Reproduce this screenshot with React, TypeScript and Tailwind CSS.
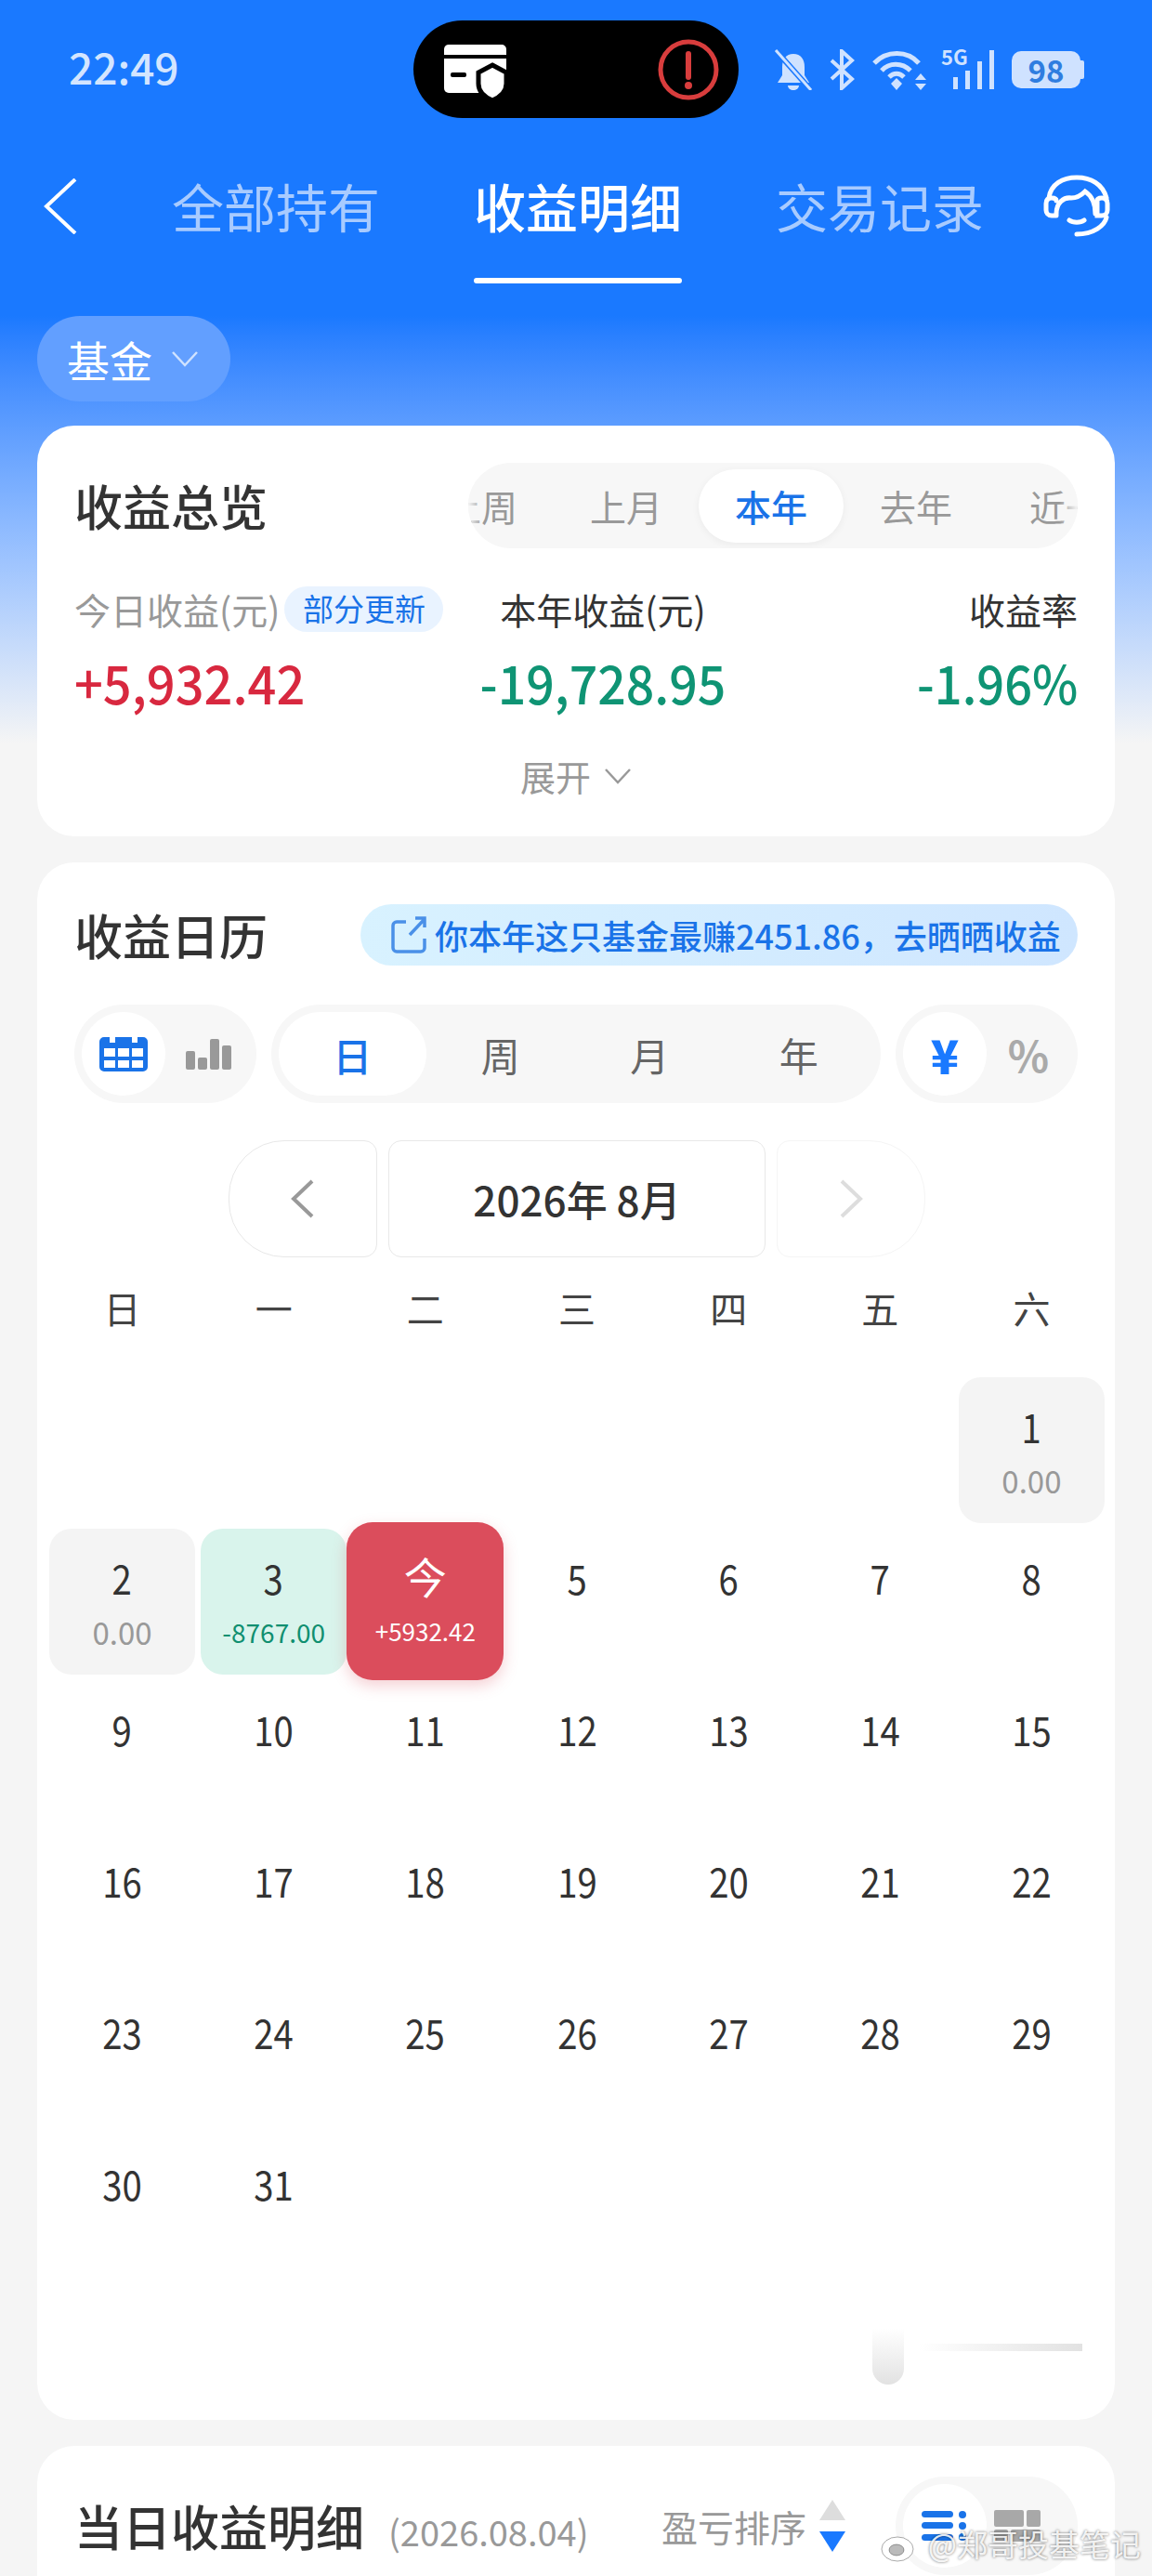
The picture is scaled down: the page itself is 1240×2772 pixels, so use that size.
const font = "font-['Noto_Sans_CJK_SC','Noto_Sans',sans-serif]";

const DownArrow = ({ color }: { color: string }) => (
  <svg width="30" height="18" viewBox="0 0 30 18" fill="none" stroke={color} strokeWidth="2.5">
    <path d="M2 2l13 14L28 2" />
  </svg>
);

const SideArrow = ({ color, right }: { color: string; right?: boolean }) => (
  <svg width="26" height="42" viewBox="0 0 26 42" fill="none" stroke={color} strokeWidth="4">
    <path d={right ? "M3 2l20 19L3 40" : "M23 2L3 21l20 19"} />
  </svg>
);

const DayCell = ({ day, value, kind }: { day: string; value?: string; kind?: string }) => {
  let box = "h-[157px] w-full flex flex-col items-center pt-[28px]";
  let sub = "text-[#999999] text-[33px]";
  if (kind === "zero") {
    box = "h-[157px] w-[157px] mx-auto rounded-[24px] bg-[#f4f4f4] flex flex-col items-center pt-[28px]";
  }
  if (kind === "loss") {
    box = "h-[157px] w-[157px] mx-auto rounded-[24px] bg-[#d9f4ec] flex flex-col items-center pt-[28px]";
    sub = "text-[#0f8f70] text-[28px]";
  }
  return (
    <div className="h-[163px]">
      <div className={box}>
        <span className="text-[44px] leading-[48px] text-[#333333] scale-x-[.87]">{day}</span>
        {value && <span className={`leading-[40px] mt-[15px] ${sub}`}>{value}</span>}
      </div>
    </div>
  );
};

const weeks = ["日", "一", "二", "三", "四", "五", "六"];
const rest = [
  ["9", "10", "11", "12", "13", "14", "15"],
  ["16", "17", "18", "19", "20", "21", "22"],
  ["23", "24", "25", "26", "27", "28", "29"],
  ["30", "31", "", "", "", "", ""],
];

export default function App() {
  return (
    <div className={`w-[1240px] h-[2772px] overflow-hidden bg-[#f5f5f5] relative ${font}`}>
      <div className="bg-gradient-to-b from-[#1a79ff] from-[340px] to-[#f5f5f5] to-[800px] h-[800px] absolute inset-x-0 top-0" />
      <div className="relative">
        {/* status bar */}
        <div className="h-[105px] mt-[22px] mb-[23px] pl-[74px] flex items-center">
          <span className="text-[46px] font-medium text-[#d3e5ff] w-[371px] shrink-0 mb-[6px]">22:49</span>
          <div className="w-[350px] h-[105px] shrink-0 rounded-full bg-black flex items-center justify-between pl-[28px] pr-[20px]">
            <svg className="mt-[7px]" width="76" height="64" viewBox="0 0 76 64">
              <path d="M11 2h56a5 5 0 0 1 5 5v6H5V7a5 5 0 0 1 6-5z" fill="#fff" />
              <path d="M5 17h67v32H5z" fill="#fff" />
              <path d="M5 45h67v4a5 5 0 0 1-5 5H10a5 5 0 0 1-5-5z" fill="#fff" />
              <rect x="12" y="32" width="17" height="5" rx="2" fill="#000" />
              <path d="M57 24l15 8v12c0 9-8 15-15 18-7-3-15-9-15-18V32z" fill="#fff" stroke="#000" strokeWidth="5" />
            </svg>
            <svg width="68" height="68" viewBox="0 0 68 68">
              <circle cx="34" cy="34" r="30" fill="none" stroke="#d83d3d" strokeWidth="5" />
              <path d="M34 17v25" stroke="#d83d3d" strokeWidth="6" strokeLinecap="round" />
              <circle cx="34" cy="51" r="4" fill="#d83d3d" />
            </svg>
          </div>
          <div className="ml-[38px] flex items-center text-[#cfe2ff]">
            <svg width="42" height="44" viewBox="0 0 42 44" fill="#cfe2ff">
              <path d="M21 5c8 0 12 6 12 14v9l5 8H4l5-8v-9C9 11 13 5 21 5zM15 39h12c0 3-3 5-6 5s-6-2-6-5z" />
              <path d="M1 0l39 44" stroke="#1a79ff" strokeWidth="6" />
              <path d="M2 1l38 43" stroke="#cfe2ff" strokeWidth="3" />
            </svg>
            <svg className="ml-[17px]" width="28" height="44" viewBox="0 0 28 44" fill="none" stroke="#cfe2ff" strokeWidth="4">
              <path d="M3 12l22 20-11 10V2l11 10L3 32" />
            </svg>
            <svg className="ml-[18px]" width="60" height="44" viewBox="0 0 60 44" fill="none" stroke="#cfe2ff" strokeWidth="5">
              <path d="M3 15c13-14 36-14 48 0M11 23c8-9 22-9 31 0M19 30c5-5 11-5 16 0" />
              <path d="M27 31l6 6-6 7-6-7z" fill="#cfe2ff" stroke="none" />
              <path d="M53 26l6 7H47zM53 44l6-7H47z" fill="#cfe2ff" stroke="none" />
            </svg>
            <div className="ml-[15px] relative w-[57px] h-[42px]">
              <span className="absolute left-0 top-[-6px] text-[22px] font-bold leading-[24px]">5G</span>
              <div className="absolute right-0 bottom-0 flex items-end gap-[8px]">
                <div className="w-[5px] h-[13px] bg-[#cfe2ff]" />
                <div className="w-[5px] h-[20px] bg-[#cfe2ff]" />
                <div className="w-[5px] h-[30px] bg-[#cfe2ff]" />
                <div className="w-[5px] h-[42px] bg-[#cfe2ff]" />
              </div>
            </div>
            <div className="ml-[19px] flex items-center">
              <div className="w-[74px] h-[40px] rounded-[10px] bg-[#cfe2ff] flex items-center justify-center text-[33px] leading-[40px] font-semibold text-[#2f7de0]">98</div>
              <div className="w-[4px] h-[20px] rounded-r-[2px] bg-[#cfe2ff]" />
            </div>
          </div>
        </div>
        {/* tabs */}
        <div className="h-[100px] flex items-start pl-[47px] text-[56px] leading-[72px]">
          <svg className="mt-[42px] shrink-0" width="36" height="60" viewBox="0 0 36 60" fill="none" stroke="#ffffff" strokeWidth="4">
            <path d="M34 1L3 30l31 29" />
          </svg>
          <span className="ml-[102px] mt-[35px] text-[#a8cbff] whitespace-nowrap">全部持有</span>
          <div className="ml-[101px] mt-[35px] flex flex-col items-center">
            <span className="text-white font-medium whitespace-nowrap">收益明细</span>
            <div className="w-[224px] h-[6px] rounded-full bg-white mt-[42px]" />
          </div>
          <span className="ml-[101px] mt-[35px] text-[#a8cbff] whitespace-nowrap">交易记录</span>
          <svg className="ml-[50px] mt-[30px] shrink-0" width="100" height="85" viewBox="0 0 100 85" fill="none" stroke="#fff" strokeWidth="5" strokeLinecap="round">
            <path d="M20 33C22 18 35 11 50 11s28 7 32 22" />
            <path d="M28 52h-5c-4 0-6-3-6-6v-7c0-4 2-6 6-6 3 0 5 1 5 3" />
            <path d="M28 50c0-12 8-18 16-17 6 0 11-3 15-7 6 4 11 12 11 24" />
            <path d="M72 36c0-2 2-3 5-3 4 0 6 2 6 6v7c0 3-2 6-6 6h-5z" />
            <path d="M82 54c-2 9-14 18-32 18" />
            <path d="M42 57c4 3 12 3 16 0" />
          </svg>
        </div>
        {/* filter */}
        <div className="px-[40px] mt-[-10px]">
          <div className="mt-[100px] w-[208px] h-[92px] rounded-[46px] bg-[#629fff] flex items-center pl-[32px] gap-[20px] text-white text-[46px]">
            基金 <DownArrow color="#cfe2ff" />
          </div>
        </div>
        {/* overview */}
        <div className="mx-[40px] mt-[26px] h-[442px] rounded-[40px] bg-white px-[40px] pt-[40px]">
          <div className="flex justify-between items-center h-[92px]">
            <span className="text-[52px] font-medium text-[#333333]">收益总览</span>
            <div className="w-[656px] h-[92px] rounded-[46px] bg-[#f7f7f7] flex items-center text-[39px] text-[#999999] overflow-hidden relative">
              <span className="w-[156px] shrink-0 -ml-[64px] text-center whitespace-nowrap">上周</span>
              <span className="w-[156px] shrink-0 text-center whitespace-nowrap">上月</span>
              <span className="w-[156px] h-[79px] shrink-0 rounded-[40px] bg-white shadow-[0_2px_8px_#0000000d] text-[#1a73e8] font-medium flex items-center justify-center">本年</span>
              <span className="w-[156px] shrink-0 text-center whitespace-nowrap">去年</span>
              <span className="shrink-0 pl-[44px] whitespace-nowrap">近一年</span>
              <div className="absolute left-0 inset-y-0 w-[16px] bg-gradient-to-r from-[#f7f7f7] to-transparent" />
              <div className="absolute right-0 inset-y-0 w-[20px] bg-gradient-to-l from-[#f7f7f7] to-transparent" />
            </div>
          </div>
          <div className="flex mt-[37px]">
            <div className="w-[438px] shrink-0">
              <div className="flex items-center h-[56px]">
                <span className="text-[39px] text-[#999999] whitespace-nowrap">今日收益(元)</span>
                <span className="ml-[5px] w-[171px] h-[49px] rounded-[25px] bg-[#e9f3ff] text-[#1a73e8] text-[33px] flex items-center justify-center whitespace-nowrap">部分更新</span>
              </div>
              <div className="text-[57px] font-medium text-[#d8283f] mt-[15px] leading-[70px] scale-x-[.95] origin-left">+5,932.42</div>
            </div>
            <div className="w-[262px] shrink-0 text-center whitespace-nowrap">
              <div className="text-[39px] text-[#333333] h-[56px] leading-[56px]">本年收益(元)</div>
              <div className="-mx-[20px] text-[57px] font-medium text-[#0f9474] mt-[15px] leading-[70px] scale-x-[.94]">-19,728.95</div>
            </div>
            <div className="ml-auto text-right whitespace-nowrap">
              <div className="text-[39px] text-[#333333] h-[56px] leading-[56px]">收益率</div>
              <div className="text-[57px] font-medium text-[#0f9474] mt-[15px] leading-[70px] scale-x-[.92] origin-right">-1.96%</div>
            </div>
          </div>
          <div className="flex items-center justify-center gap-[14px] mt-[38px] text-[38px] text-[#999999]">
            展开 <DownArrow color="#999999" />
          </div>
        </div>
        {/* calendar */}
        <div className="mx-[40px] mt-[28px] h-[1676px] rounded-[40px] bg-white px-[40px] pt-[40px] relative">
          <div className="flex justify-between items-center h-[76px]">
            <span className="text-[52px] font-medium text-[#333333]">收益日历</span>
            <div className="w-[772px] h-[66px] rounded-[33px] bg-gradient-to-r from-[#d8f2ff] to-[#cfe6ff] flex items-center pl-[33px] gap-[9px] text-[36px] text-[#1a73e8] font-medium whitespace-nowrap">
              <svg width="38" height="40" viewBox="0 0 38 40" fill="none" stroke="#4a90e8" strokeWidth="3.5">
                <path d="M16 6H6a4 4 0 0 0-4 4v24a4 4 0 0 0 4 4h26a4 4 0 0 0 4-4V24" />
                <path d="M20 20L36 3M26 2h10v10" />
              </svg>
              你本年这只基金最赚2451.86，去晒晒收益
            </div>
          </div>
          <div className="flex justify-between mt-[37px]">
            <div className="w-[196px] h-[106px] rounded-[53px] bg-[#f7f7f7] p-[8px] flex items-center">
              <div className="w-[90px] h-[90px] shrink-0 rounded-full bg-white flex items-center justify-center">
                <svg width="54" height="38" viewBox="0 0 54 38">
                  <path d="M6 1h6v6h6V1h18v6h6V1h6a5 5 0 0 1 5 5v27a5 5 0 0 1-5 5H6a5 5 0 0 1-5-5V6a5 5 0 0 1 5-5z" fill="#1a73e8" />
                  <path d="M6 13h12v9H6zM21 13h12v9H21zM36 13h12v9H36zM6 26h12v8H6zM21 26h12v8H21zM36 26h12v8H36z" fill="#fff" />
                </svg>
              </div>
              <div className="flex items-end gap-[3px] ml-[22px]">
                <div className="w-[10px] h-[20px] rounded-[2px] bg-[#999999]" />
                <div className="w-[10px] h-[13px] rounded-[2px] bg-[#999999]" />
                <div className="w-[10px] h-[33px] rounded-[2px] bg-[#999999]" />
                <div className="w-[10px] h-[26px] rounded-[2px] bg-[#999999]" />
              </div>
            </div>
            <div className="w-[656px] h-[106px] rounded-[53px] bg-[#f7f7f7] p-[8px] flex items-center text-[42px] text-[#666666]">
              <div className="w-[160px] h-[90px] rounded-[45px] bg-white text-[#1a73e8] font-medium flex items-center justify-center">日</div>
              <span className="w-[162px] text-center">周</span>
              <span className="w-[162px] text-center">月</span>
              <span className="w-[162px] text-center">年</span>
            </div>
            <div className="w-[196px] h-[106px] rounded-[53px] bg-[#f7f7f7] p-[8px] flex items-center text-[46px] font-black">
              <div className="w-[90px] h-[90px] rounded-full bg-white text-[#1a79ff] text-[50px] flex items-center justify-center">¥</div>
              <span className="w-[90px] text-center text-[#aaaaaa] font-bold">%</span>
            </div>
          </div>
          <div className="flex justify-center gap-[12px] mt-[40px] ml-[2px]">
            <div className="w-[160px] h-[126px] rounded-l-[60px] rounded-r-[14px] border border-[#e8e8e8] flex items-center justify-center">
              <SideArrow color="#999999" />
            </div>
            <div className="w-[406px] h-[126px] rounded-[14px] border border-[#e8e8e8] flex items-center justify-center text-[44px] font-medium text-[#333333]">2026年 8月</div>
            <div className="w-[160px] h-[126px] rounded-r-[60px] rounded-l-[14px] border border-[#f5f5f5] flex items-center justify-center">
              <SideArrow color="#dddddd" right />
            </div>
          </div>
          <div className="-ml-[30px] w-[1142px] mt-[22px]">
            <div className="grid grid-cols-7 h-[64px] items-center text-center text-[40px] text-[#444444]">
              {weeks.map((w) => (
                <span key={w}>{w}</span>
              ))}
            </div>
            <div className="grid grid-cols-7 mt-[43px] text-center">
              <div className="h-[163px] col-span-6" />
              <DayCell day="1" value="0.00" kind="zero" />
              <DayCell day="2" value="0.00" kind="zero" />
              <DayCell day="3" value="-8767.00" kind="loss" />
              <div className="h-[163px] relative">
                <div className="absolute left-[-3px] right-[-3px] top-[-7px] h-[170px] rounded-[28px] bg-[#db4d5c] shadow-[0_6px_16px_#db4d5c44] flex flex-col items-center pt-[31px] text-white">
                  <span className="text-[46px] leading-[52px]">今</span>
                  <span className="text-[26px] leading-[40px] mt-[14px]">+5932.42</span>
                </div>
              </div>
              {["5", "6", "7", "8"].map((d) => (
                <DayCell key={d} day={d} />
              ))}
              {rest.flat().map((d, i) => (
                <DayCell key={i} day={d} />
              ))}
            </div>
          </div>
          {/* faded scroll hint */}
          <div className="absolute left-[899px] top-[1578px] w-[34px] h-[60px] rounded-b-full bg-gradient-to-b from-white to-[#e2e2e2]" />
          <div className="absolute left-[949px] top-[1594px] w-[176px] h-[8px] bg-gradient-to-r from-white to-[#e2e2e2]" />
        </div>
        {/* daily detail */}
        <div className="mx-[40px] mt-[28px] h-[300px] rounded-[40px] bg-white px-[40px] pt-[33px]">
          <div className="flex items-center justify-between h-[106px]">
            <div className="flex items-baseline whitespace-nowrap">
              <span className="text-[52px] font-medium text-[#333333]">当日收益明细</span>
              <span className="text-[38px] text-[#999999] ml-[26px]">(2026.08.04)</span>
            </div>
            <div className="flex items-center">
              <span className="text-[39px] text-[#999999] whitespace-nowrap">盈亏排序</span>
              <div className="flex flex-col gap-[12px] ml-[14px] mr-[54px]">
                <div className="w-0 h-0 border-x-[14px] border-x-transparent border-b-[22px] border-b-[#dddddd]" />
                <div className="w-0 h-0 border-x-[14px] border-x-transparent border-t-[22px] border-t-[#1a79ff]" />
              </div>
              <div className="w-[196px] h-[106px] rounded-[53px] bg-[#f7f7f7] p-[8px] flex items-center">
                <div className="w-[90px] h-[90px] shrink-0 rounded-full bg-white flex items-center justify-center">
                  <svg width="50" height="32" viewBox="0 0 50 32" fill="#1a73e8">
                    <rect x="0" y="0" width="34" height="7" rx="3.5" />
                    <rect x="0" y="12" width="34" height="7" rx="3.5" />
                    <rect x="0" y="25" width="34" height="7" rx="3.5" />
                    <circle cx="44" cy="4" r="4" />
                    <circle cx="44" cy="16" r="4" />
                    <circle cx="44" cy="28" r="4" />
                  </svg>
                </div>
                <svg className="ml-[8px]" width="50" height="34" viewBox="0 0 50 34" fill="#a8a8a8">
                  <rect x="0" y="0" width="32" height="18" rx="2" />
                  <rect x="35" y="0" width="15" height="18" rx="2" />
                  <rect x="0" y="21" width="15" height="13" rx="2" />
                  <rect x="18" y="21" width="32" height="13" rx="2" />
                </svg>
              </div>
            </div>
          </div>
        </div>
      </div>
      {/* watermark */}
      <div className="absolute right-[12px] bottom-[10px] flex items-center text-[33px] text-[#ffffffe6] [text-shadow:0_0_3px_#00000099]">
        <svg width="46" height="42" viewBox="0 0 46 42" fill="#ffffffe6" stroke="#00000055" strokeWidth="1">
          <ellipse cx="19" cy="27" rx="17" ry="13" />
          <ellipse cx="18" cy="28" rx="8" ry="6" fill="#bbbbbb" />
          <path d="M28 6c8-2 16 5 14 14M28 13c4-1 8 3 7 7" fill="none" stroke="#ffffffe6" strokeWidth="3" />
        </svg>
        <span className="ml-[6px]">@郑哥投基笔记</span>
      </div>
    </div>
  );
}
